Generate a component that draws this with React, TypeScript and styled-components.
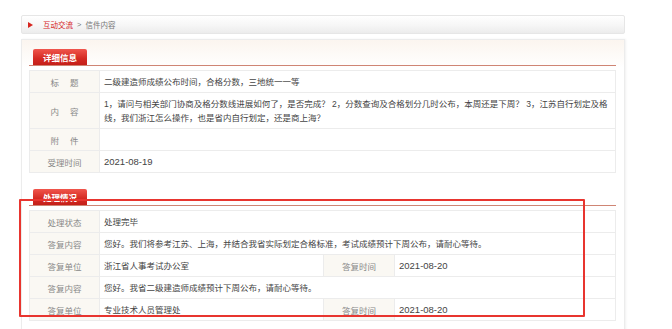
import * as React from 'react';
import styled, { createGlobalStyle } from 'styled-components';

const GlobalStyle = createGlobalStyle`
    html, body {
        margin: 0;
        padding: 0;
        background: #fff;
    }

    body {
        font-family: "Liberation Sans", "Noto Sans CJK SC", sans-serif;
        font-size: 8.5px;
        color: #333;
    }
`;

const Page = styled.div`
    position: relative;
    width: 604px;
    padding: 15px 0 0 21px;
`;

const Breadcrumb = styled.div`
    height: 17px;
    display: flex;
    align-items: center;
    gap: 4px;
    padding-left: 6px;

    border: 1px solid #e6e6e6;
    border-radius: 2px;
    background: linear-gradient(#ffffff, #f6f6f6 55%, #ececec);

    color: #777;
    font-size: 7.5px;
`;

const Arrow = styled.span`
    width: 0;
    height: 0;
    margin-right: 6px;
    border-top: 3px solid transparent;
    border-bottom: 3px solid transparent;
    border-left: 5px solid #d6261f;
`;

const CrumbLink = styled.a`
    color: #d6261f;
    text-decoration: none;
`;

const Panel = styled.div`
    margin-top: 5px;
    padding: 9px 8px 20px 7px;

    border: 1px solid #ececec;
    box-shadow: 1px 0 2px rgba(0,0,0,0.06);
    background: linear-gradient(#fbf5ef, #ffffff 28px);
`;

interface SectionProps {
    gapTop?: number;
}

const Section = styled.section<SectionProps>`
    margin-top: ${props => props.gapTop || 0}px;
`;

const SectionHead = styled.div`
    display: flex;
    align-items: flex-end;
    border-bottom: 1px solid #cf8574;
`;

const Tab = styled.div`
    width: 54px;
    height: 16px;
    margin-left: 4px;

    display: flex;
    align-items: center;
    justify-content: center;

    border-radius: 2px 2px 0 0;
    background: linear-gradient(#f0554c, #d42a22 60%, #c41f19);

    color: #fff;
    font-weight: bold;
    font-size: 8.5px;
`;

const Table = styled.table`
    width: 100%;
    margin-top: 4px;
    border-collapse: collapse;
    table-layout: fixed;
`;

interface RowProps {
    tall?: boolean;
}

const Row = styled.tr<RowProps>`
    height: ${props => props.tall ? 36 : 22}px;
`;

const Label = styled.td`
    border: 1px solid #ececec;
    background: #faf8f3;
    color: #888;
    text-align: center;
    white-space: pre;
    padding: 0;
`;

interface ValueProps {
    date?: boolean;
}

const Value = styled.td<ValueProps>`
    border: 1px solid #ececec;
    padding: 0 4px;
    line-height: 14px;
    color: #444;
    font-size: ${props => props.date ? '9.5px' : '8.5px'};
`;

const Highlight = styled.div`
    position: absolute;
    left: 19px;
    top: 199px;
    width: 566px;
    height: 118px;
    box-sizing: border-box;
    border: 2px solid #e8352f;
    border-radius: 1px;
    pointer-events: none;
`;

interface ReplyRow {
    content: string;
    unit: string;
    time: string;
}

const replies: ReplyRow[] = [
    {
        content: '您好。我们将参考江苏、上海，并结合我省实际划定合格标准，考试成绩预计下周公布，请耐心等待。',
        unit: '浙江省人事考试办公室',
        time: '2021-08-20'
    },
    {
        content: '您好。我省二级建造师成绩预计下周公布，请耐心等待。',
        unit: '专业技术人员管理处',
        time: '2021-08-20'
    }
];

export default function App() {
    return (
        <Page>
            <GlobalStyle />

            <Breadcrumb>
                <Arrow />
                <CrumbLink href="#">互动交流</CrumbLink>
                <span>&gt;</span>
                <span>信件内容</span>
            </Breadcrumb>

            <Panel>

                {/* 详细信息 */}
                <Section>
                    <SectionHead><Tab>详细信息</Tab></SectionHead>
                    <Table>
                        <colgroup>
                            <col style={{ width: 70 }} />
                            <col />
                        </colgroup>
                        <tbody>
                            <Row>
                                <Label>标　 题</Label>
                                <Value>二级建造师成绩公布时间，合格分数，三地统一一等</Value>
                            </Row>
                            <Row tall>
                                <Label>内　 容</Label>
                                <Value>
                                    1，请问与相关部门协商及格分数线进展如何了，是否完成？ 2，分数查询及合格划分几时公布，本周还是下周？ 3，江苏自行划定及格<br />
                                    线，我们浙江怎么操作，也是省内自行划定，还是商上海？
                                </Value>
                            </Row>
                            <Row>
                                <Label>附　 件</Label>
                                <Value />
                            </Row>
                            <Row>
                                <Label>受理时间</Label>
                                <Value date>2021-08-19</Value>
                            </Row>
                        </tbody>
                    </Table>
                </Section>

                {/* 处理情况 */}
                <Section gapTop={16}>
                    <SectionHead><Tab>处理情况</Tab></SectionHead>
                    <Table>
                        <colgroup>
                            <col style={{ width: 70 }} />
                            <col style={{ width: 224 }} />
                            <col style={{ width: 71 }} />
                            <col />
                        </colgroup>
                        <tbody>
                            <Row>
                                <Label>处理状态</Label>
                                <Value colSpan={3}>处理完毕</Value>
                            </Row>
                            {
                                replies.map(reply => (
                                    <React.Fragment key={reply.unit}>
                                        <Row>
                                            <Label>答复内容</Label>
                                            <Value colSpan={3}>{reply.content}</Value>
                                        </Row>
                                        <Row>
                                            <Label>答复单位</Label>
                                            <Value>{reply.unit}</Value>
                                            <Label>答复时间</Label>
                                            <Value date>{reply.time}</Value>
                                        </Row>
                                    </React.Fragment>
                                ))
                            }
                        </tbody>
                    </Table>
                </Section>

            </Panel>

            <Highlight />
        </Page>
    );
}
